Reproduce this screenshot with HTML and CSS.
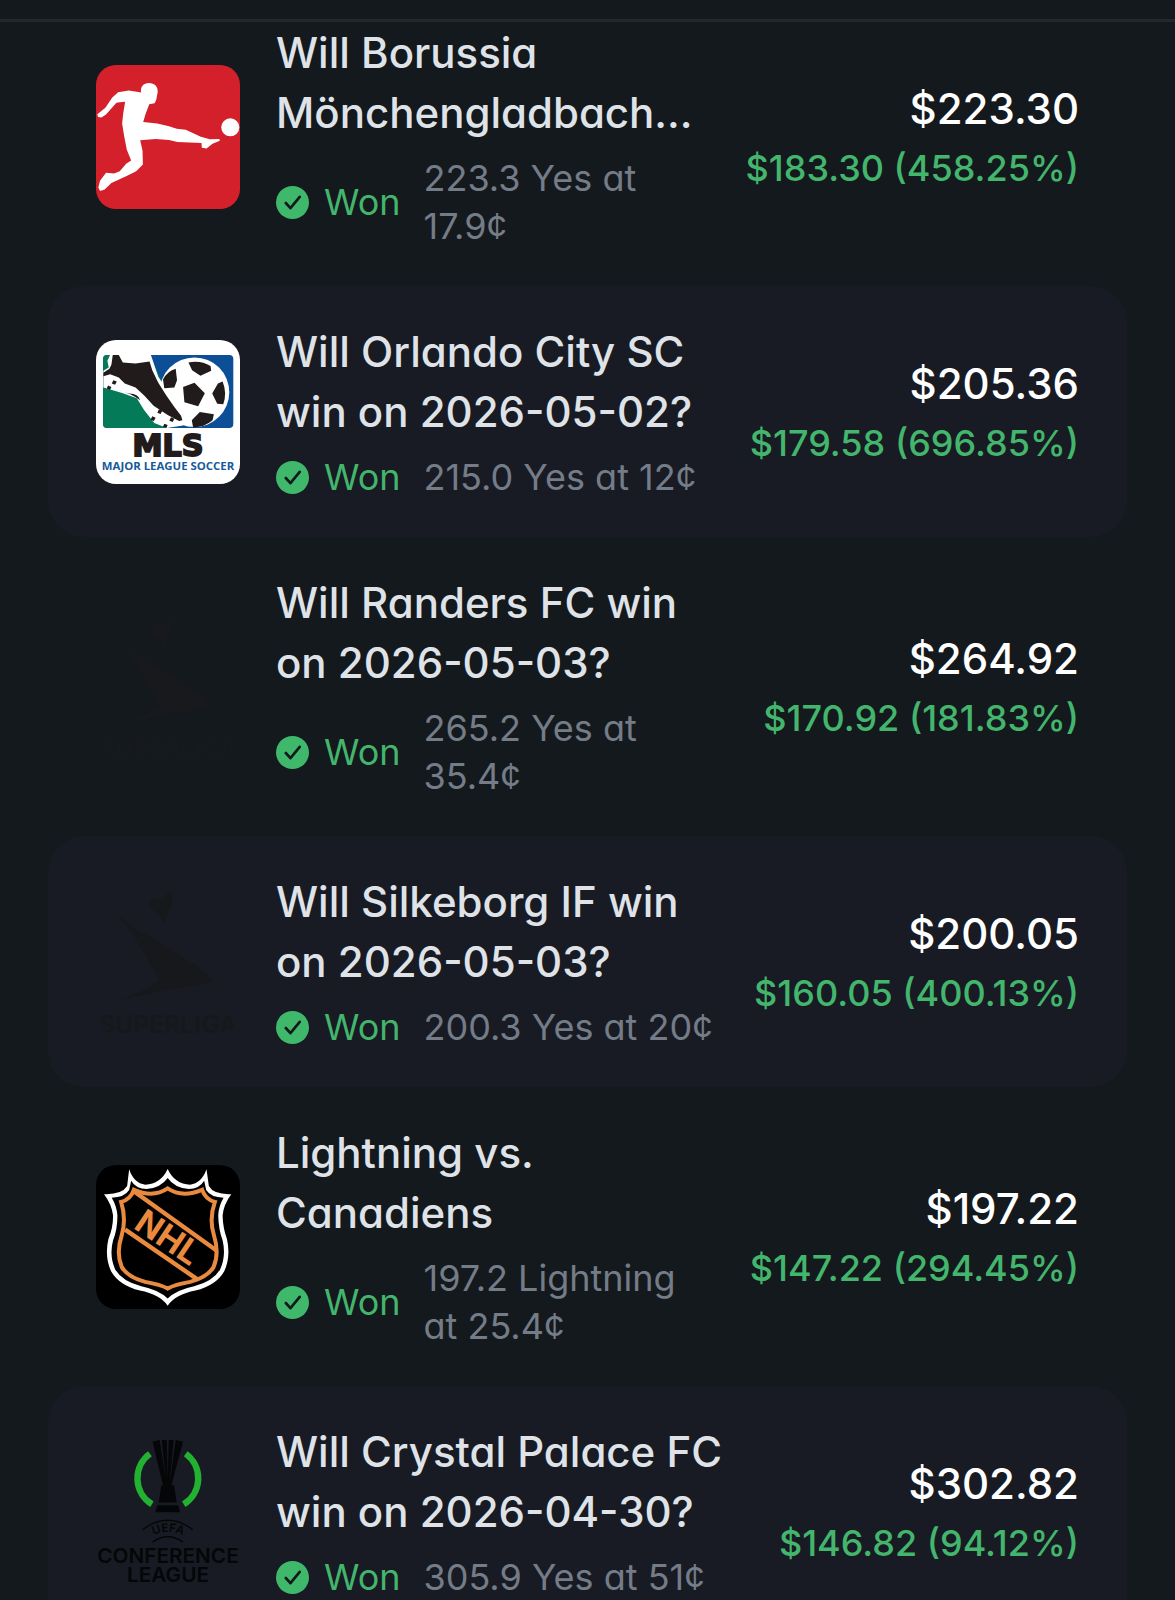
FILE: index.html
```html
<!DOCTYPE html>
<html lang="en">
<head>
<meta charset="utf-8">
<meta name="viewport" content="width=device-width, initial-scale=1">
<title>Closed positions</title>
<link rel="stylesheet" href="styles.css">
</head>
<body>
<svg class="defs" aria-hidden="true">
  <symbol id="check" viewBox="0 0 32 32">
    <circle cx="16" cy="16" r="16" fill="#3fb86b"/>
    <path d="M9.5 16.5l4.5 5 9-11" fill="none" stroke="#14191d" stroke-width="2.6" stroke-linecap="round" stroke-linejoin="round"/>
  </symbol>
  <symbol id="superliga" viewBox="33 30 430 430">
    <path d="M196 62l34-8 22-16 8 2-2 34-24 60-10-30-28-20z"/>
    <path d="M103 110l50 38 96 54 92 60 44 38-40 14-110 14-50 14-84 18 60-24 62-36-42-76-38-62z"/>
    <text class="superliga-name" x="248" y="456" text-anchor="middle">SUPERLIGA</text>
  </symbol>
</svg>
<div class="app">
  <header class="topbar"></header>
  <main class="list">
    <article class="row row-first">
      <svg class="logo" viewBox="32 30 430 430" role="img" aria-label="Bundesliga">
        <rect x="32" y="30" width="430" height="430" fill="#d3202a"/>
        <circle cx="433" cy="216" r="27" fill="#fff"/>
        <path fill="#fff" d="M167 112C163 96 174 84 190 84C207 84 218 95 216 112L212 134L207 144L191 147L180 176L173 200L215 205L250 213L273 220L300 223L345 244L372 252L400 251L402 256L380 265L362 279L348 277L347 263L275 260L250 254L210 251L164 255L171 286L172 327L152 347L122 362L78 382L58 402L44 406L39 396L44 376L62 352L86 354L103 347L122 325L137 315L124 283L116 242L110 205L113 176L119 140L103 141L93 143L62 178L48 187L38 185L36 177L60 158L80 128L98 111L130 106Z"/>
      </svg>
      <div class="info">
        <h2 class="title">Will Borussia Mönchengladbach...</h2>
        <div class="meta"><span class="status"><svg class="check"><use href="#check"/></svg>Won</span><span class="shares">223.3 Yes at 17.9¢</span></div>
      </div>
      <div class="amounts"><div class="value">$223.30</div><div class="gain">$183.30 (458.25%)</div></div>
    </article>

    <article class="row row-alt">
      <svg class="logo" viewBox="32 30 430 430" role="img" aria-label="Major League Soccer">
        <rect x="32" y="30" width="430" height="430" fill="#fff"/>
        <rect x="53" y="75" width="389" height="218" rx="12" fill="#0c4f96"/>
        <path d="M65 75H190L228 150L250 293H65Q53 293 53 281V87Q53 75 65 75Z" fill="#047a59"/>
        <path d="M74 75H196L218 140L300 262L292 285L244 293L206 278L176 240L154 204L110 188L54 172V122L70 112L66 92Z" fill="#fff"/>
        <circle cx="326" cy="186" r="104" fill="#fff"/>
        <path fill="#211c1b" d="M82 75L78 104L72 116L54 128V138L74 132L100 142L118 160L150 172L176 196L204 226L246 254L280 272L290 270L286 256L266 230L242 196L218 158L200 120L192 94L150 100L112 97L100 75Z"/>
        <path fill="#211c1b" d="M104 183Q135 188 164 210Q158 190 132 190Z"/>
        <path fill="#211c1b" d="M84 150l10 4-5 10-10-4zM68 166l10 4-4 9-10-4zM220 237l10 4-5 10-10-4zM200 258l10 4-5 10-10-4zM256 261l10 4-5 10-10-4zM236 280l10 4-4 9-10-4z"/>
        <path fill="#211c1b" d="M308 97Q346 90 374 108L376 122L344 137L319 120ZM232 148Q246 122 270 116L274 150L266 172L236 174ZM292 170L326 158L357 189L337 228L296 216ZM410 154Q424 188 412 222L394 220L379 190L396 160ZM342 245L384 252L380 270Q354 292 322 291L318 270Z"/>
        <text class="mls-name" x="247" y="377" text-anchor="middle">MLS</text>
        <text class="mls-full" x="247" y="417" text-anchor="middle">MAJOR LEAGUE SOCCER</text>
      </svg>
      <div class="info">
        <h2 class="title">Will Orlando City SC win on 2026-05-02?</h2>
        <div class="meta"><span class="status"><svg class="check"><use href="#check"/></svg>Won</span><span class="shares">215.0 Yes at 12¢</span></div>
      </div>
      <div class="amounts"><div class="value">$205.36</div><div class="gain">$179.58 (696.85%)</div></div>
    </article>

    <article class="row">
      <svg class="logo logo-faint" role="img" aria-label="Superliga"><use href="#superliga"/></svg>
      <div class="info">
        <h2 class="title">Will Randers FC win on 2026-05-03?</h2>
        <div class="meta"><span class="status"><svg class="check"><use href="#check"/></svg>Won</span><span class="shares">265.2 Yes at 35.4¢</span></div>
      </div>
      <div class="amounts"><div class="value">$264.92</div><div class="gain">$170.92 (181.83%)</div></div>
    </article>

    <article class="row row-alt">
      <svg class="logo logo-dark" role="img" aria-label="Superliga"><use href="#superliga"/></svg>
      <div class="info">
        <h2 class="title">Will Silkeborg IF win on 2026-05-03?</h2>
        <div class="meta"><span class="status"><svg class="check"><use href="#check"/></svg>Won</span><span class="shares">200.3 Yes at 20¢</span></div>
      </div>
      <div class="amounts"><div class="value">$200.05</div><div class="gain">$160.05 (400.13%)</div></div>
    </article>

    <article class="row">
      <svg class="logo" viewBox="33 33 430 430" role="img" aria-label="NHL">
        <rect x="33" y="33" width="430" height="430" fill="#000"/>
        <path fill="#fff" d="M132 46Q146 88 180 92Q226 90 247 45Q268 90 314 92Q348 88 363 46L370 96Q384 122 437 120Q414 150 411 184Q412 222 424 254Q436 306 416 350Q392 392 330 408Q270 420 247 453Q224 420 164 408Q102 392 78 350Q58 306 70 254Q84 222 84 184Q80 150 57 120Q110 122 126 96Z"/>
        <path fill="#000" d="M138 80Q152 104 184 105Q226 102 247 72Q268 102 310 105Q342 104 356 80L362 108Q376 130 414 131Q399 156 398 184Q399 226 411 258Q422 304 404 344Q384 380 326 395Q272 406 247 432Q222 406 168 395Q110 380 90 344Q72 304 84 258Q97 226 97 184Q95 156 80 131Q118 130 132 108Z"/>
        <path fill="none" stroke="#e98a3f" stroke-width="12" stroke-linejoin="miter" d="M146 107Q204 132 247 103Q290 132 350 107Q360 136 388 143Q370 194 385 242Q402 296 384 338Q366 368 314 382Q268 390 247 402Q226 390 180 382Q128 368 110 338Q92 296 110 242Q124 194 108 143Q136 136 146 107Z"/>
        <path fill="none" stroke="#e98a3f" stroke-width="13" d="M148 113L394 289M120 226L338 376"/>
        <g transform="rotate(34 247 250)"><text class="nhl-name" x="247" y="284" text-anchor="middle">NHL</text></g>
      </svg>
      <div class="info">
        <h2 class="title">Lightning vs. Canadiens</h2>
        <div class="meta"><span class="status"><svg class="check"><use href="#check"/></svg>Won</span><span class="shares">197.2 Lightning at 25.4¢</span></div>
      </div>
      <div class="amounts"><div class="value">$197.22</div><div class="gain">$147.22 (294.45%)</div></div>
    </article>

    <article class="row row-alt">
      <svg class="logo logo-open" viewBox="33 51 430 430" role="img" aria-label="UEFA Conference League">
        <path fill="none" stroke="#22b131" stroke-width="19" d="M194 92A91 91 0 0 0 200 243M301 92A91 91 0 0 1 295 243"/>
        <path fill="#050608" d="M202 56L223 51L244 186H233ZM229 50L244 48L248 186H243ZM250 48L265 50L252 186H247ZM271 51L293 56L258 186H252ZM228 186H266L274 238H220ZM216 246H279L284 267H210Z"/>
        <path fill="none" stroke="#050608" stroke-width="4" d="M172 319Q247 262 322 319M202 356Q247 324 293 356"/>
        <path id="uefa-arc" fill="none" d="M188 346Q247 304 309 346"/>
        <text class="uefa-name"><textPath href="#uefa-arc" startOffset="50%" text-anchor="middle">UEFA</textPath></text>
        <text class="conf-name" x="248" y="417" text-anchor="middle">CONFERENCE</text>
        <text class="conf-name" x="248" y="476" text-anchor="middle">LEAGUE</text>
      </svg>
      <div class="info">
        <h2 class="title">Will Crystal Palace FC win on 2026-04-30?</h2>
        <div class="meta"><span class="status"><svg class="check"><use href="#check"/></svg>Won</span><span class="shares">305.9 Yes at 51¢</span></div>
      </div>
      <div class="amounts"><div class="value">$302.82</div><div class="gain">$146.82 (94.12%)</div></div>
    </article>
  </main>
</div>
</body>
</html>
```
FILE: styles.css
```css
* {
  box-sizing: border-box;
}

body {
  margin: 0;
  background: #14191d;
  color: #dfe3e8;
  font-family: Inter, "Liberation Sans", sans-serif;
  font-feature-settings: "cv11";
}

.defs {
  position: absolute;
  width: 0;
  height: 0;
}

.app {
  display: flex;
  flex-direction: column;
  height: 100vh;
}

.topbar {
  flex: none;
  height: 22px;
  border-bottom: 3px solid #24282d;
}

.list {
  flex: 1;
  min-height: 0;
  padding: 0 48px;
  overflow-y: auto;
  scrollbar-width: none;
}

.row {
  display: flex;
  align-items: center;
  gap: 36px;
  padding: 36px 48px;
  border-radius: 36px;
}

.row-first {
  padding-top: 1px;
}

.row-alt {
  background: #181b23;
}

.logo {
  flex: none;
  width: 144px;
  height: 144px;
  border-radius: 20px;
}

.logo-open {
  border-radius: 0;
}

.logo-faint {
  fill: #17191c;
}

.logo-dark {
  fill: #17181b;
}

.info {
  flex: 1;
  min-width: 0;
}

.title {
  margin: 0 0 11px;
  font-size: 42px;
  font-weight: 500;
  line-height: 60px;
}

.meta {
  display: flex;
  align-items: center;
  gap: 23px;
  font-size: 36px;
  line-height: 48px;
}

.status {
  display: flex;
  align-items: center;
  gap: 15px;
  color: #43b56c;
}

.check {
  width: 33px;
  height: 33px;
}

.shares {
  color: #747c88;
}

.amounts {
  flex: none;
  padding-top: 2px;
  text-align: right;
}

.value {
  color: #fff;
  font-size: 42px;
  font-weight: 500;
  line-height: 60px;
}

.gain {
  color: #43b56c;
  font-size: 36px;
  font-weight: 500;
  line-height: 58px;
}

.superliga-name {
  font-size: 74px;
  font-weight: 600;
}

.mls-name {
  fill: #211c1b;
  stroke: #211c1b;
  stroke-width: 6px;
  font-family: "DejaVu Sans", sans-serif;
  font-size: 90px;
  font-weight: 700;
}

.mls-full {
  fill: #175a9b;
  font-family: "Open Sans", sans-serif;
  font-size: 34px;
  font-weight: 700;
}

.nhl-name {
  fill: #e98a3f;
  font-size: 100px;
  font-weight: 700;
}

.uefa-name {
  fill: #050608;
  font-size: 35px;
  font-weight: 600;
}

.conf-name {
  fill: #050608;
  font-size: 62px;
  font-weight: 600;
}
```
